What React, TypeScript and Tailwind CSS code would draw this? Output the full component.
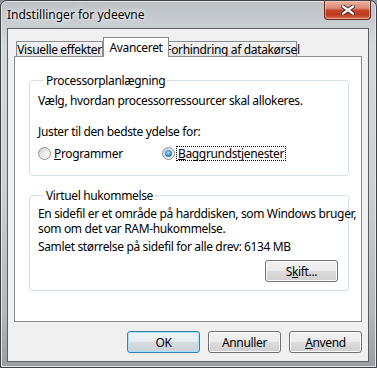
import { type ReactNode } from 'react'

const FONT = "font-['Segoe_UI','Noto_Sans',sans-serif]"

function Btn({ children, primary }: { children: ReactNode; primary?: boolean }) {
  return (
    <button
      className={
        'h-[22px] w-[73px] rounded-[3px] border text-[12px] leading-[15px] text-black ' +
        (primary
          ? 'border-[#3c7fb1] bg-[linear-gradient(#eef4f7_0%,#e6edf1_50%,#d6dde2_50%,#c9d1d6_100%)] shadow-[inset_0_0_0_1px_#a9e2fa]'
          : 'border-[#707070] bg-[linear-gradient(#f2f2f2_0%,#ebebeb_50%,#dddddd_50%,#cfcfcf_100%)] shadow-[inset_0_0_0_1px_#fcfcfc]')
      }
    >
      {children}
    </button>
  )
}

function Radio({ checked }: { checked?: boolean }) {
  return (
    <span className="flex h-[13px] w-[13px] shrink-0 items-center justify-center rounded-full border border-[#8e8f8f] bg-[linear-gradient(135deg,#cfcfcf,#f4f4f4_70%,#ffffff)]">
      {checked && (
        <span className="h-[7px] w-[7px] rounded-full bg-[radial-gradient(circle_at_45%_40%,#b6ecff_0%,#3c93cf_45%,#17507f_100%)]" />
      )}
    </span>
  )
}

export default function App() {
  return (
    <div className={`h-[368px] w-[377px] overflow-hidden bg-[#8f959a] ${FONT}`}>
      <div className="flex h-full flex-col rounded-t-[7px] border border-[#3e4246] bg-[linear-gradient(180deg,#bcc1c5_0%,#d5d9dc_12%,#cdd1d4_50%,#b4b8bc_85%,#9a9ea2_100%)] shadow-[inset_0_0_0_1px_#e3e6e8]">
        {/* Title bar */}
        <div className="flex h-[27px] shrink-0 items-start">
          <span className="pl-[6px] pt-[6px] text-[12px] leading-[15px] text-black [text-shadow:0_0_6px_#fff,0_0_3px_#fff]">
            Indstillinger for ydeevne
          </span>
          <div className="ml-auto mr-[5px] flex h-[19px] w-[47px] items-center justify-center rounded-b-[4px] border border-t-0 border-[#6b2a1d] bg-[linear-gradient(180deg,#eab0a0_0%,#dc8a75_40%,#c6452a_52%,#bd3a20_75%,#d9705a_100%)] shadow-[inset_0_0_0_1px_rgba(255,220,210,0.5)]">
            <svg width="14" height="10" viewBox="0 0 14 10">
              <path d="M2 1.5 L12 8.5 M12 1.5 L2 8.5" stroke="#3a2a28" strokeWidth="4" strokeLinecap="square" />
              <path d="M2 1.5 L12 8.5 M12 1.5 L2 8.5" stroke="#ffffff" strokeWidth="2.2" strokeLinecap="square" />
            </svg>
          </div>
        </div>

        {/* Client area */}
        <div className="ml-[6px] mr-[7px] flex h-[334px] flex-col whitespace-nowrap border border-[#5a5f64] bg-[#f0f0f0] px-[6px] pt-[8px] text-[12px] leading-[15px] tracking-[-0.35px] text-black">
          {/* Tabs */}
          <div className="flex items-end pl-[2px]">
            <div className="flex h-[15px] w-[87px] items-center justify-center border border-b-0 border-[#898c95] bg-[linear-gradient(#f3f3f3,#e3e3e3)]">
              Visuelle effekter
            </div>
            <div className="relative z-10 -mb-px flex h-[20px] w-[66px] items-center justify-center border border-b-0 border-[#898c95] bg-white">
              Avanceret
            </div>
            <div className="-ml-px flex h-[15px] w-[129px] items-center justify-center border border-b-0 border-[#898c95] bg-[linear-gradient(#f3f3f3,#e3e3e3)]">
              Forhindring af datakørsel
            </div>
          </div>

          {/* Tab panel */}
          <div className="flex h-[266px] w-[348px] flex-col border border-[#898c95] bg-white pl-[14px] pr-[12px] pt-[16px]">
            <fieldset className="min-w-0 rounded-[3px] border border-[#d5dfe5] pb-[14px] pl-[8px]">
              <legend className="ml-[6px] px-[2px]">Processorplanlægning</legend>
              <div className="pt-[5px]">Vælg, hvordan processorressourcer skal allokeres.</div>
              <div className="pt-[16px]">Juster til den bedste ydelse for:</div>
              <div className="flex items-center pt-[7px]">
                <div className="flex w-[124px] items-center">
                  <Radio />
                  <span className="pl-[3px]">
                    <span className="underline">P</span>rogrammer
                  </span>
                </div>
                <div className="flex items-center">
                  <Radio checked />
                  <span className="ml-[1px] border border-dotted border-black px-[1px] leading-[13px]">
                    <span className="underline">B</span>aggrundstjenester
                  </span>
                </div>
              </div>
            </fieldset>

            <fieldset className="mt-[12px] min-w-0 rounded-[3px] border border-[#d5dfe5] pb-[8px] pl-[8px] pr-[10px]">
              <legend className="ml-[6px] px-[2px]">Virtuel hukommelse</legend>
              <div className="pt-[3px]">
                En sidefil er et område på harddisken, som Windows bruger,
                <br />
                som om det var RAM-hukommelse.
              </div>
              <div className="flex pt-[3px]">
                <span className="w-[206px]">Samlet størrelse på sidefil for alle drev:</span>
                <span>6134 MB</span>
              </div>
              <div className="flex justify-end pt-[6px]">
                <Btn>
                  S<span className="underline">k</span>ift...
                </Btn>
              </div>
            </fieldset>
          </div>

          {/* Dialog buttons */}
          <div className="flex justify-end gap-[8px] pt-[9px]">
            <Btn primary>OK</Btn>
            <Btn>Annuller</Btn>
            <Btn>
              <span className="underline">A</span>nvend
            </Btn>
          </div>
        </div>
      </div>
    </div>
  )
}
